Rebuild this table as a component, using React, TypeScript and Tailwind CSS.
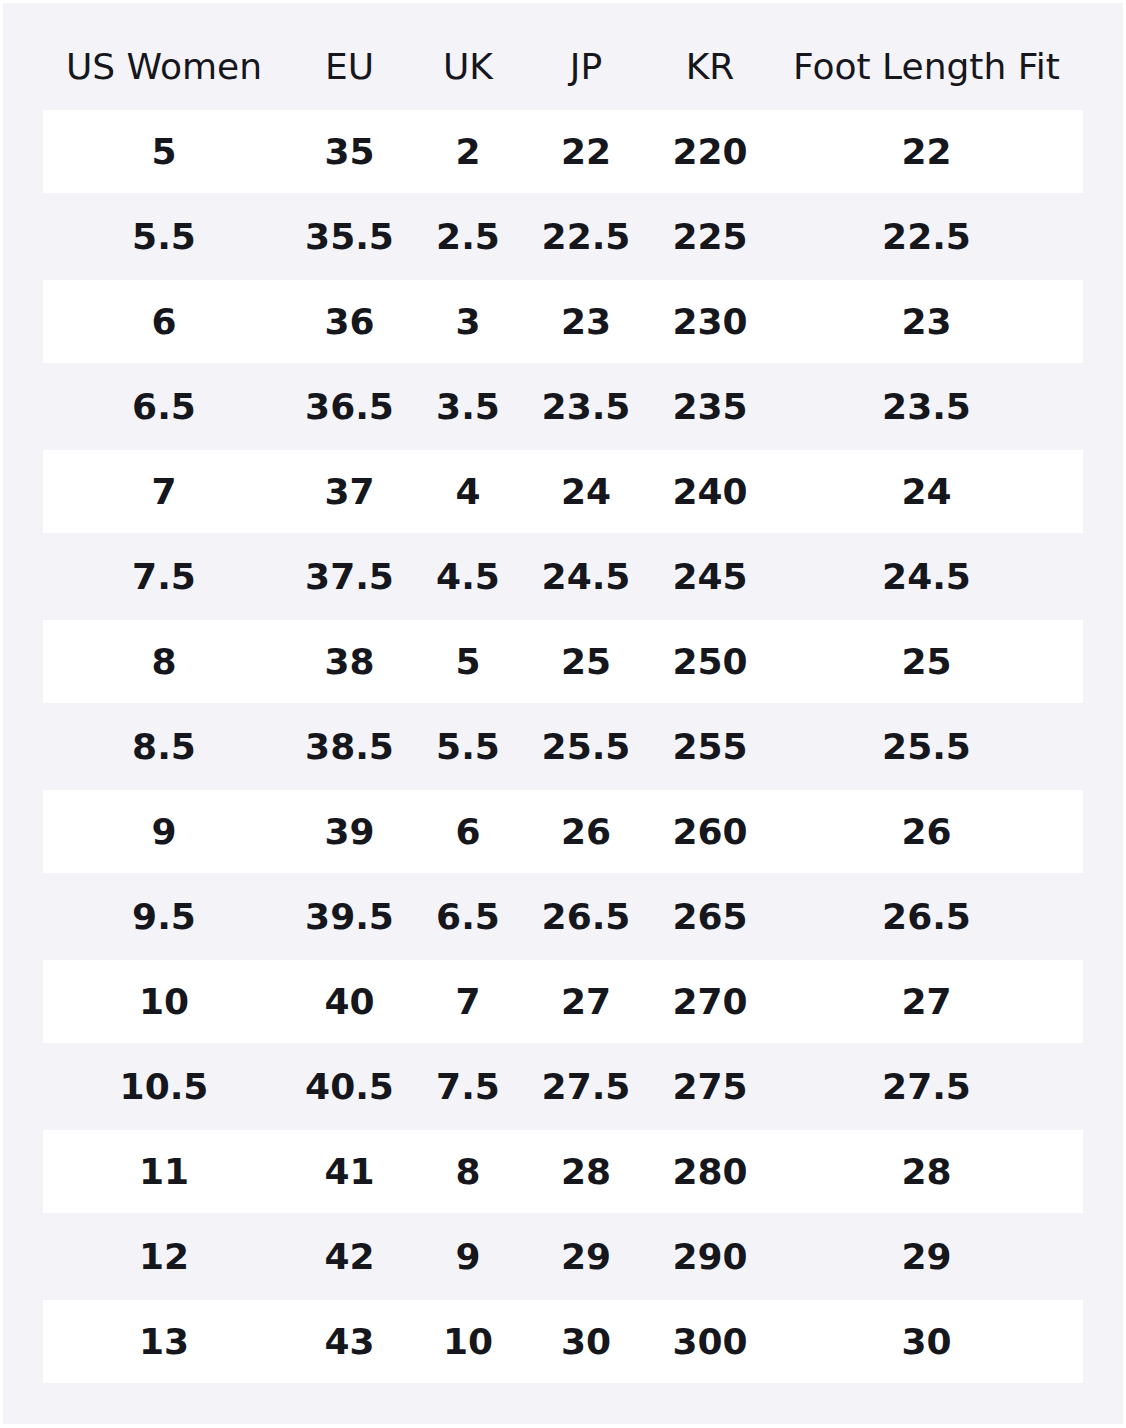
import React from "react";

const rows: string[][] = [
  ["5", "35", "2", "22", "220", "22"],
  ["5.5", "35.5", "2.5", "22.5", "225", "22.5"],
  ["6", "36", "3", "23", "230", "23"],
  ["6.5", "36.5", "3.5", "23.5", "235", "23.5"],
  ["7", "37", "4", "24", "240", "24"],
  ["7.5", "37.5", "4.5", "24.5", "245", "24.5"],
  ["8", "38", "5", "25", "250", "25"],
  ["8.5", "38.5", "5.5", "25.5", "255", "25.5"],
  ["9", "39", "6", "26", "260", "26"],
  ["9.5", "39.5", "6.5", "26.5", "265", "26.5"],
  ["10", "40", "7", "27", "270", "27"],
  ["10.5", "40.5", "7.5", "27.5", "275", "27.5"],
  ["11", "41", "8", "28", "280", "28"],
  ["12", "42", "9", "29", "290", "29"],
  ["13", "43", "10", "30", "300", "30"],
];

const headers = ["US Women", "EU", "UK", "JP", "KR", "Foot Length Fit"];

const App = () => {
  return (
    <div className="bg-white p-[3px] font-['DejaVu_Sans',sans-serif] text-[#16161d]">
      <div className="bg-[#f4f4f8] px-[40px] pt-[40px] pb-[41px]">
        <table className="w-full table-fixed border-collapse">
          <colgroup>
            <col className="w-[242px]" />
            <col className="w-[129px]" />
            <col className="w-[108px]" />
            <col className="w-[128px]" />
            <col className="w-[120px]" />
            <col />
          </colgroup>
          <thead>
            <tr>
              {headers.map((h) => (
                <th
                  key={h}
                  className="h-[67px] p-0 pb-[20px] text-center align-middle text-[36px] font-normal leading-[42px] whitespace-nowrap"
                >
                  {h}
                </th>
              ))}
            </tr>
          </thead>
          <tbody>
            {rows.map((r, i) => (
              <tr
                key={i}
                className={i % 2 === 0 ? "bg-white h-[83px]" : "bg-transparent h-[87px]"}
              >
                {r.map((c, j) => (
                  <td
                    key={j}
                    className="p-0 text-center align-middle text-[36px] font-bold leading-[42px]"
                  >
                    {c}
                  </td>
                ))}
              </tr>
            ))}
          </tbody>
        </table>
      </div>
    </div>
  );
};

export default App;
